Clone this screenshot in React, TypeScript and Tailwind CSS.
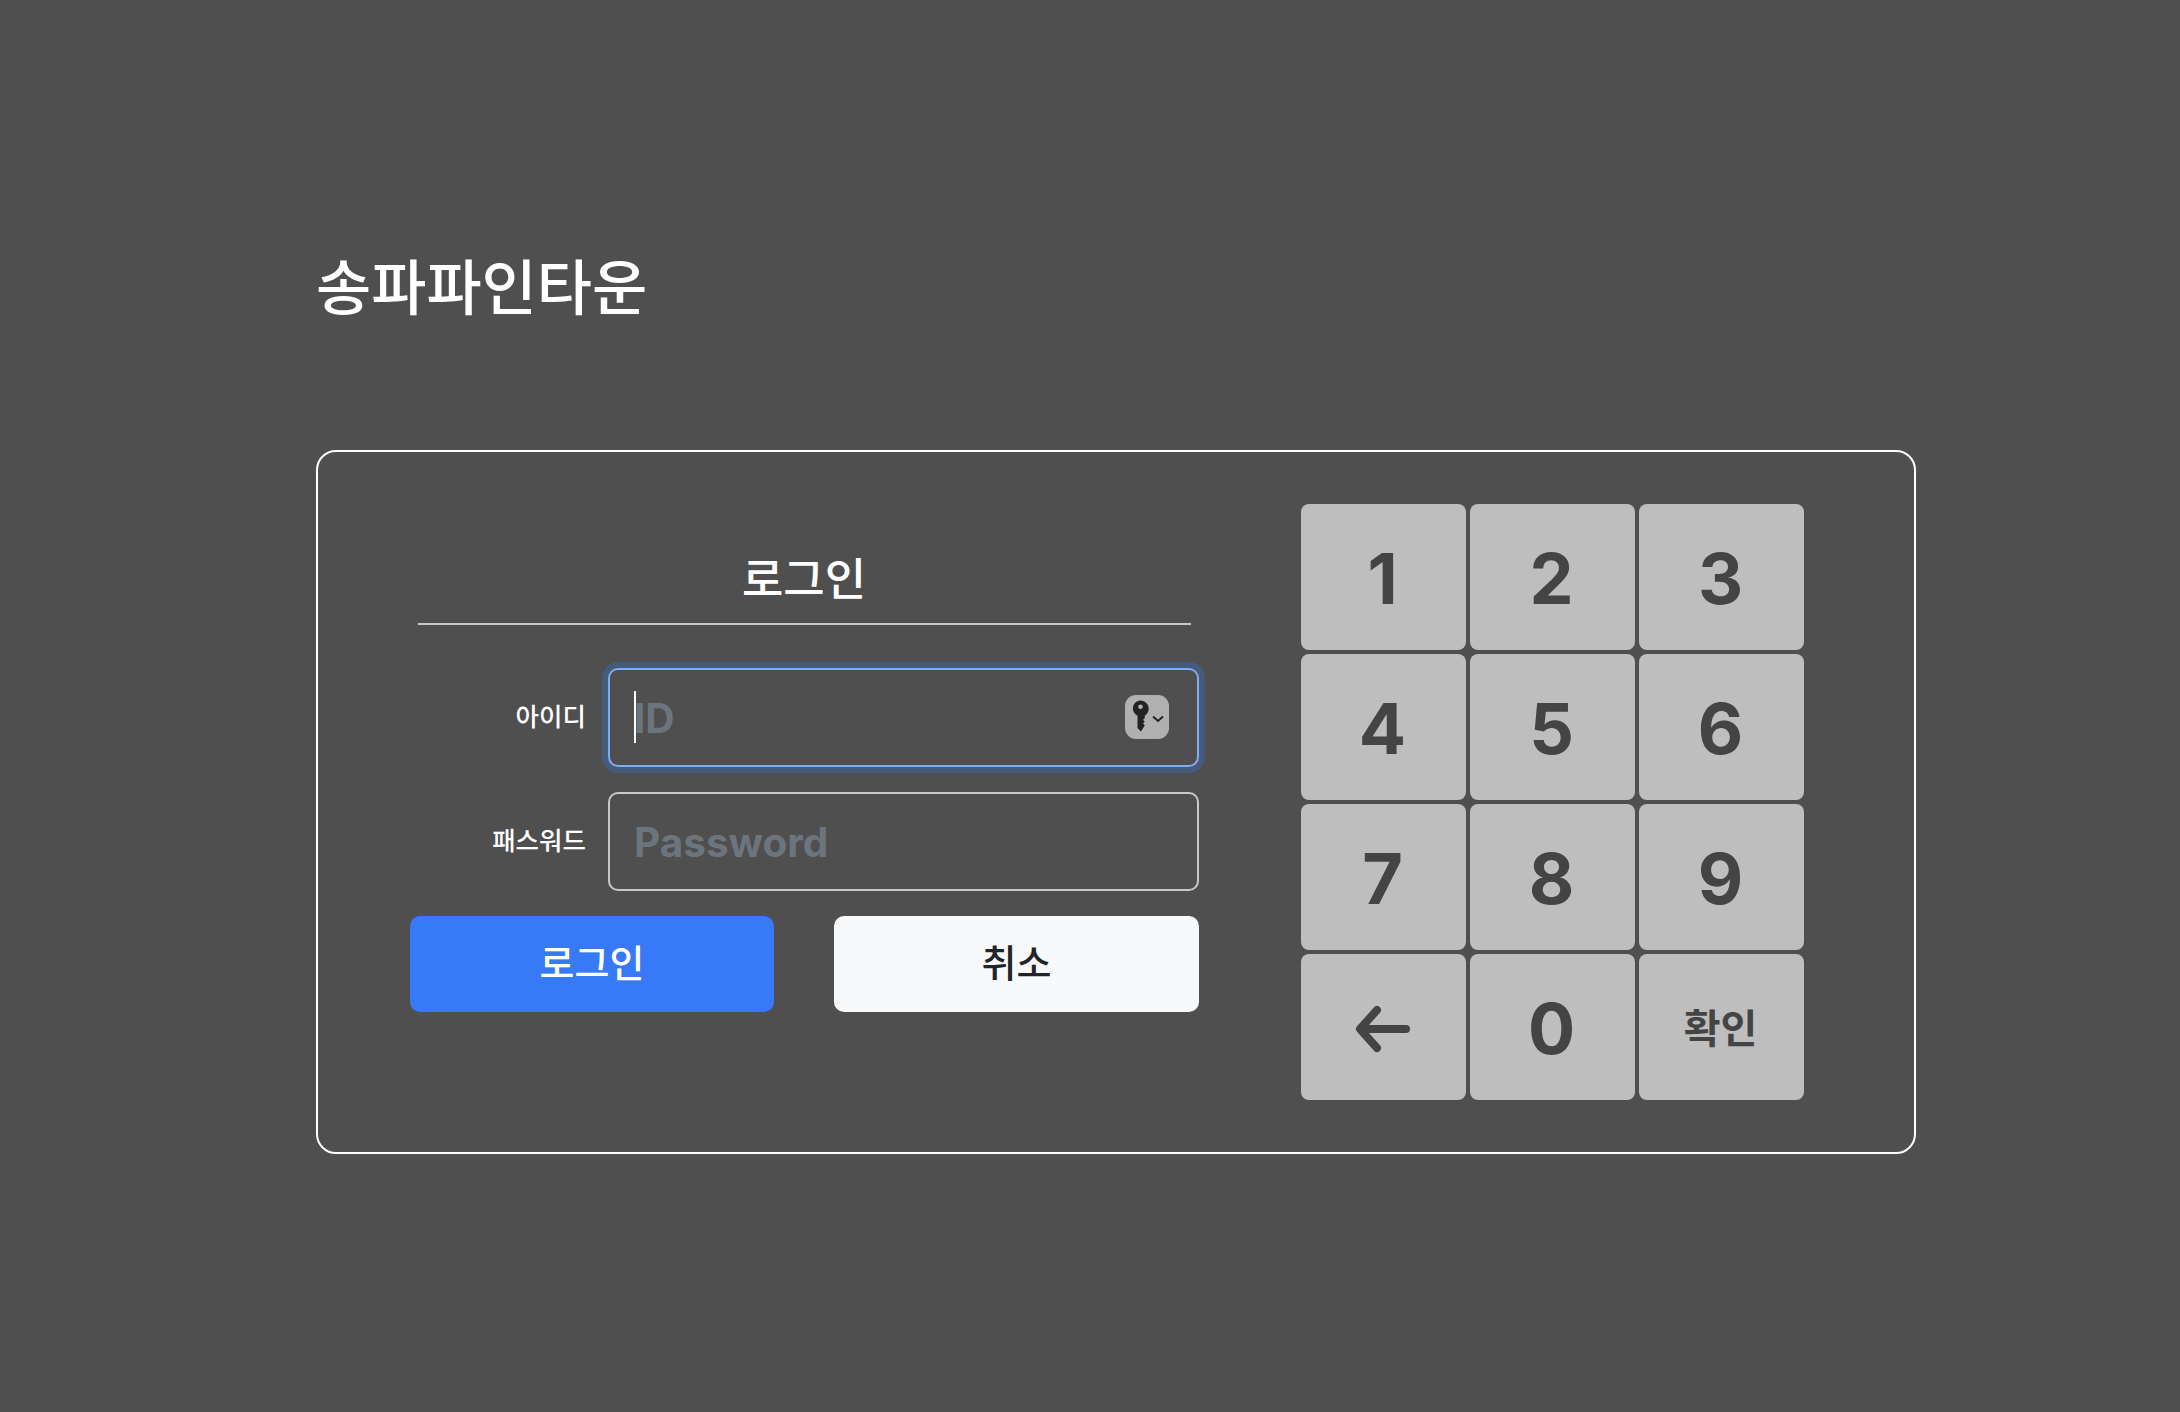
const keys = ["1", "2", "3", "4", "5", "6", "7", "8", "9"];

function KeyChip() {
  return (
    <div className="absolute right-[30px] top-[27px] w-[44px] h-[44px] rounded-[11px] bg-[#b0b0b0]">
      <svg width="44" height="44" viewBox="0 0 44 44" className="block">
        <path
          fill="#222222"
          fillRule="evenodd"
          d="M15.500 5.500c4.600 0 8.200 3.700 8.200 8.300 0 3-1.600 5.500-3.900 6.900V23l-1.800 1.800 1.800 1.900-1.800 1.700 1.800 1.800-3.800 6.300-3.500-3.600V20.700c-2.500-1.400-4.600-3.900-4.600-6.900 0-4.600 3-8.300 7.600-8.300zm0 3.900a2.300 2.300 0 1 0 0 4.600 2.300 2.300 0 0 0 0-4.600z"
        />
        <path d="M28 21.500l5 4.500 5-4.500" fill="none" stroke="#222222" strokeWidth="2" />
      </svg>
    </div>
  );
}

function ArrowKey() {
  return (
    <svg width="60" height="48" viewBox="0 0 60 48" className="block -translate-x-[1px]">
      <path
        d="M25 5L8 24l17 19M9 24h45"
        fill="none"
        stroke="#444444"
        strokeWidth="8"
        strokeLinecap="round"
        strokeLinejoin="round"
      />
    </svg>
  );
}

const keyClass =
  "flex items-center justify-center rounded-[8px] bg-[#bebebe] pr-[2px] pt-[3px] text-[#444444] text-[70px] font-bold leading-none";

export default function App() {
  return (
    <div className="min-h-[1412px] w-full bg-[#4f4f4f] pl-[316px] pt-[250px] font-['Inter','Noto_Sans_CJK_KR',sans-serif]">
      {/* title */}
      <h1 className="h-[200px] text-[60px] leading-[76px] text-white font-medium">송파파인타운</h1>

      <div className="flex w-[1600px] h-[704px] rounded-[20px] border-2 border-white pl-[92px] pt-[52px]">
        {/* login form */}
        <div className="w-[789px]">
          <div className="mx-[8px] h-[121px] w-[773px] border-b-2 border-[#c8c8c8] pt-[46px] text-center text-[45px] leading-[60px] text-white">
            <span className="-ml-[1px] inline-block font-medium">로그인</span>
          </div>
          <div className="mt-[43px] flex items-center justify-end">
            <label className="mr-[22px] mb-[2px] text-[25.500px] font-medium leading-[32px] text-white">아이디</label>
            <div className="relative">
              <input
                placeholder="ID"
                className="block w-[591px] h-[99px] rounded-[10px] border-2 border-[#7fadf0] bg-transparent pl-[24px] pt-[2px] text-[40.500px] font-bold shadow-[0_0_0_6px_#465a7b] outline-none placeholder:text-[#6c757d]"
              />
              <span className="absolute left-[26px] top-[23px] h-[52px] w-[2px] bg-white" />
              <KeyChip />
            </div>
          </div>
          <div className="mt-[25px] flex items-center justify-end">
            <label className="mr-[22px] mb-[2px] text-[25.500px] font-medium leading-[32px] text-white">패스워드</label>
            <input
              placeholder="Password"
              className="block w-[591px] h-[99px] rounded-[10px] border-2 border-[#c8c8c8] bg-transparent pl-[24px] pt-[2px] text-[40.500px] font-bold outline-none placeholder:text-[#6c757d]"
            />
          </div>
          <div className="mt-[25px] flex justify-between">
            <button className="h-[96px] w-[364px] rounded-[10px] bg-[#3779f6] pb-[2px] text-[38px] font-medium text-white">로그인</button>
            <button className="h-[96px] w-[365px] rounded-[10px] bg-[#f8f9fa] pb-[2px] text-[38px] font-medium text-[#212529]">취소</button>
          </div>
        </div>

        {/* keypad */}
        <div className="ml-[102px] grid h-fit grid-cols-[repeat(3,165px)] grid-rows-[repeat(4,146px)] gap-[4px]">
          {keys.map((k) => (
            <button key={k} className={keyClass}>
              {k}
            </button>
          ))}
          <button className={keyClass}>
            <ArrowKey />
          </button>
          <button className={keyClass}>0</button>
          <button className={`${keyClass} !text-[40px]`}>확인</button>
        </div>
      </div>
    </div>
  );
}
